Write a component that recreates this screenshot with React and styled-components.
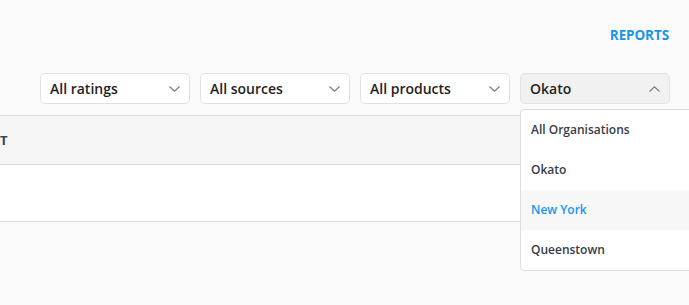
import React from "react";
import styled, { createGlobalStyle } from "styled-components";

const GlobalStyle = createGlobalStyle`
  html, body {
    margin: 0;
    padding: 0;
    background: #fafafa;
    font-family: "Open Sans", "Noto Sans", sans-serif;
    overflow: hidden;
  }
`;

const filters = [
  { label: "All ratings" },
  { label: "All sources" },
  { label: "All products" },
  { label: "Okato", open: true },
];

const organisations = ["All Organisations", "Okato", "New York", "Queenstown"];

const Chevron = ({ up }) => (
  <svg width="11" height="6" viewBox="0 0 11 6" fill="none">
    <polyline
      points={up ? "0.5,5.5 5.5,0.8 10.5,5.5" : "0.5,0.5 5.5,5.2 10.5,0.5"}
      stroke="#7a7a7a"
      strokeWidth="1.1"
    />
  </svg>
);

const Page = styled.div`
  width: 689px;
  height: 305px;
  position: relative;
  overflow: hidden;
`;

const TopBar = styled.div`
  height: 70px;
  display: flex;
  align-items: center;
  justify-content: flex-end;
  padding: 0 20px;
`;

const ReportsLink = styled.a`
  color: #1a95ec;
  font-size: 13.5px;
  font-weight: 700;
  text-transform: uppercase;
  text-decoration: none;
  letter-spacing: -0.1px;
`;

const FilterRow = styled.div`
  display: flex;
  justify-content: flex-end;
  gap: 10px;
  padding: 3px 19px 0;
`;

const SelectWrap = styled.div`
  position: relative;
`;

const SelectBox = styled.div`
  width: 150px;
  height: 31px;
  box-sizing: border-box;
  display: flex;
  align-items: center;
  justify-content: space-between;
  padding: 0 9px 0 9px;
  border: 1px solid ${(p) => (p.$open ? "#e3e3e3" : "#e1e1e1")};
  border-radius: 5px;
  background: ${(p) => (p.$open ? "#f1f1f1" : "#ffffff")};
  color: #1f1f1f;
  font-size: 14px;
  font-weight: 600;
`;

const Menu = styled.ul`
  position: absolute;
  top: 36px;
  left: 0;
  width: 210px;
  margin: 0;
  padding: 0;
  list-style: none;
  background: #ffffff;
  border: 1px solid #dedede;
  border-radius: 4px;
  z-index: 2;
`;

const MenuItem = styled.li`
  height: 40px;
  display: flex;
  align-items: center;
  padding: 0 10px 2px;
  box-sizing: border-box;
  font-size: 12px;
  font-weight: 600;
  color: ${(p) => (p.$active ? "#1a95ec" : "#373c47")};
  background: ${(p) => (p.$active ? "#f7f7f7" : "transparent")};
`;

const Table = styled.div`
  margin-top: 11px;
`;

const HeaderRow = styled.div`
  height: 48px;
  display: flex;
  align-items: center;
  background: #f5f5f5;
  border-top: 1px solid #dcdcdc;
  border-bottom: 1px solid #dcdcdc;
  color: #3d4452;
  font-size: 13px;
  font-weight: 700;
`;

const BodyRow = styled.div`
  height: 56px;
  background: #ffffff;
  border-bottom: 1px solid #dcdcdc;
`;

export default function App() {
  return (
    <>
      <GlobalStyle />
      <Page>
        <TopBar>
          <ReportsLink href="#">Reports</ReportsLink>
        </TopBar>
        <FilterRow>
          {filters.map((f) => (
            <SelectWrap key={f.label}>
              <SelectBox $open={f.open}>
                <span>{f.label}</span>
                <Chevron up={f.open} />
              </SelectBox>
              {f.open && (
                <Menu>
                  {organisations.map((o) => (
                    <MenuItem key={o} $active={o === "New York"}>
                      {o}
                    </MenuItem>
                  ))}
                </Menu>
              )}
            </SelectWrap>
          ))}
        </FilterRow>
        <Table>
          <HeaderRow>T</HeaderRow>
          <BodyRow />
        </Table>
      </Page>
    </>
  );
}
